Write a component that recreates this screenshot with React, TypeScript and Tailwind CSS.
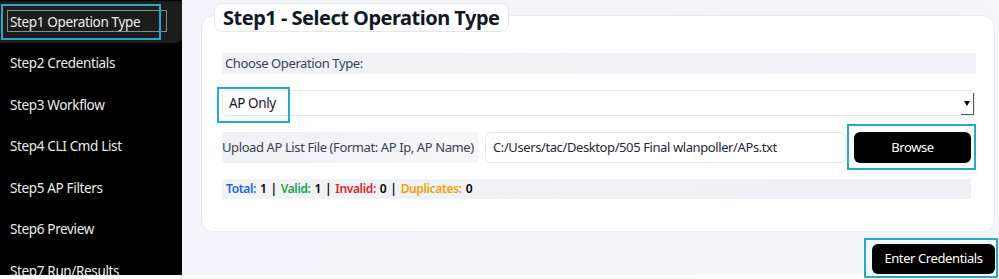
import React from "react";

const steps = [
  "Step1 Operation Type",
  "Step2 Credentials",
  "Step3 Workflow",
  "Step4 CLI Cmd List",
  "Step5 AP Filters",
  "Step6 Preview",
  "Step7 Run/Results",
];

// annotation boxes drawn over the screenshot
function Mark({ className }: { className: string }) {
  return <div className={`pointer-events-none absolute border-2 border-[#27a9c9] ${className}`} />;
}

export default function App() {
  return (
    <div
      className="relative h-[279px] w-[999px] overflow-hidden bg-white"
      style={{ fontFamily: '"Noto Sans", "Open Sans", sans-serif' }}
    >
      <div className="flex h-[275px]">
        {/* sidebar */}
        <aside className="w-[182px] shrink-0 bg-black pt-[1px]">
          {steps.map((s, i) => (
            <div
              key={s}
              className={`flex h-[41.5px] items-center px-[10px] text-[13.5px] tracking-[-0.35px] text-[#ececec] ${
                i === 0 ? "rounded-br-md bg-[#1c1c1c]" : ""
              }`}
            >
              {s}
            </div>
          ))}
        </aside>

        {/* main */}
        <main className="flex-1 bg-gradient-to-r from-[#f1f4f8] to-[#f4f6f9] pl-[19px] pr-[4px] pt-[3px] text-[13px] tracking-[-0.4px]">
          <div className="relative z-10 ml-[13px] inline-flex h-[29px] items-center rounded-lg border border-[#e4e7ec] bg-white px-[8px]">
            <h1 className="text-[20px] font-bold leading-none tracking-[-0.5px] text-[#111827]">Step1 - Select Operation Type</h1>
          </div>

          <section className="-mt-[17px] rounded-xl border border-[#e6e9ee] bg-white pb-[32px] pl-[20px] pr-[18px] pt-[37px]">
            <div className="flex h-[21px] items-center bg-gradient-to-r from-[#f0f2f5] to-[#eef1f5] px-[3px] text-[#374151]">
              Choose Operation Type:
            </div>

            <div className="relative mr-[1px] mt-[16px] flex h-[26px] items-center rounded border border-[#e5e7eb] bg-white px-[6px] text-[13.5px] text-[#111827]">
              AP Only
              <div className="absolute right-[0px] top-[2px] h-[22px] w-[13px] border-b border-r border-[#555]" />
              <div className="absolute right-[4px] top-[10px] h-0 w-0 border-l-[3.5px] border-r-[3.5px] border-t-[5px] border-l-transparent border-r-transparent border-t-black" />
            </div>

            <div className="mr-[5px] mt-[16px] flex h-[31px] items-stretch gap-[7px]">
              <div className="flex w-[256px] items-center whitespace-nowrap bg-gradient-to-r from-[#eef1f5] to-[#f6f7f9] text-[#374151]">
                Upload AP List File (Format: AP Ip, AP Name)
              </div>
              <div className="flex w-[361px] items-center rounded-md border border-[#e5e7eb] bg-white px-[7px] text-[#1f2937]">
                C:/Users/tac/Desktop/505 Final wlanpoller/APs.txt
              </div>
              <button className="ml-[1px] flex flex-1 items-center justify-center rounded-md bg-black tracking-[-0.4px] text-white">
                Browse
              </button>
            </div>

            <div className="mr-[5px] mt-[16px] flex h-[20px] items-center bg-gradient-to-r from-[#f1f3f6] to-[#edf0f4] px-[4px] text-[12px] font-semibold tracking-[-0.35px]">
              <span className="text-[#2563eb]">Total:</span>
              <span className="ml-[4px] text-black">1</span>
              <span className="mx-[4px] text-black">|</span>
              <span className="text-[#16a34a]">Valid:</span>
              <span className="ml-[4px] text-black">1</span>
              <span className="mx-[4px] text-black">|</span>
              <span className="text-[#dc2626]">Invalid:</span>
              <span className="ml-[4px] text-black">0</span>
              <span className="mx-[4px] text-black">|</span>
              <span className="text-[#f59e0b]">Duplicates:</span>
              <span className="ml-[4px] text-black">0</span>
            </div>
          </section>

          <div className="mt-[12px] flex justify-end">
            <button className="flex h-[30px] w-[123px] items-center justify-center rounded-md bg-black tracking-[-0.4px] text-white">
              Enter Credentials
            </button>
          </div>
        </main>
      </div>

      {/* overlays */}
      <div className="pointer-events-none absolute left-[7px] top-[10px] h-[22px] w-[160px] border border-[#8a8a8a]" />
      <Mark className="left-[1px] top-[4px] h-[36px] w-[160px]" />
      <Mark className="left-[217px] top-[87px] h-[36px] w-[73px]" />
      <Mark className="left-[847px] top-[124px] h-[46px] w-[129px]" />
      <Mark className="left-[864px] top-[238px] h-[40px] w-[134px]" />
    </div>
  );
}
